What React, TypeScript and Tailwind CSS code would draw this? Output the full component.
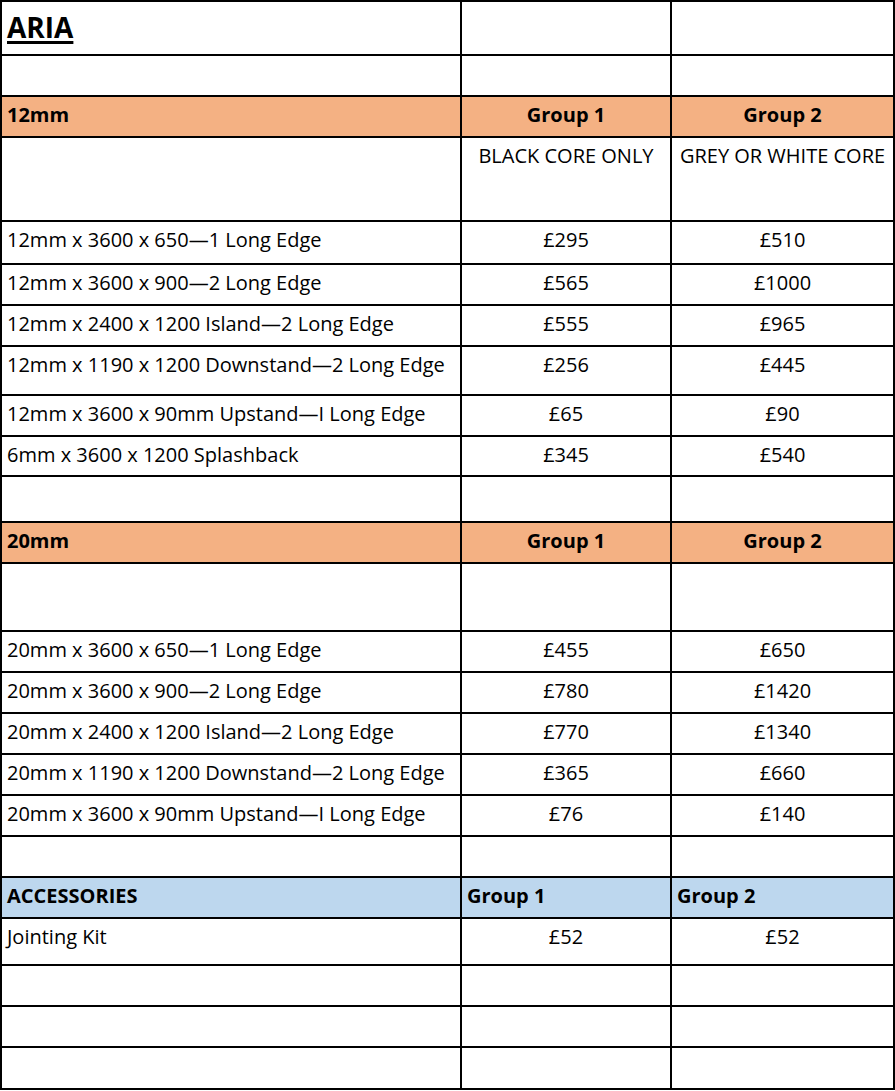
import React from 'react';

type Row = {
  h: string;
  cells: [string, string, string];
  kind?: 'orange' | 'blue' | 'title';
};

const rows: Row[] = [
  { h: 'h-[52px]', cells: ['ARIA', '', ''], kind: 'title' },
  { h: 'h-[39px]', cells: ['', '', ''] },
  { h: 'h-[39px]', cells: ['12mm', 'Group 1', 'Group 2'], kind: 'orange' },
  { h: 'h-[82px]', cells: ['', 'BLACK CORE ONLY', 'GREY OR WHITE CORE'] },
  { h: 'h-[41px]', cells: ['12mm x 3600 x 650\u20141 Long Edge', '£295', '£510'] },
  { h: 'h-[39px]', cells: ['12mm x 3600 x 900\u20142 Long Edge', '£565', '£1000'] },
  { h: 'h-[39px]', cells: ['12mm x 2400 x 1200 Island\u20142 Long Edge', '£555', '£965'] },
  { h: 'h-[47px]', cells: ['12mm x 1190 x 1200 Downstand\u20142 Long Edge', '£256', '£445'] },
  { h: 'h-[39px]', cells: ['12mm x 3600 x 90mm Upstand\u2014I Long Edge', '£65', '£90'] },
  { h: 'h-[38px]', cells: ['6mm x 3600 x 1200 Splashback', '£345', '£540'] },
  { h: 'h-[44px]', cells: ['', '', ''] },
  { h: 'h-[39px]', cells: ['20mm', 'Group 1', 'Group 2'], kind: 'orange' },
  { h: 'h-[66px]', cells: ['', '', ''] },
  { h: 'h-[39px]', cells: ['20mm x 3600 x 650\u20141 Long Edge', '£455', '£650'] },
  { h: 'h-[39px]', cells: ['20mm x 3600 x 900\u20142 Long Edge', '£780', '£1420'] },
  { h: 'h-[39px]', cells: ['20mm x 2400 x 1200 Island\u20142 Long Edge', '£770', '£1340'] },
  { h: 'h-[39px]', cells: ['20mm x 1190 x 1200 Downstand\u20142 Long Edge', '£365', '£660'] },
  { h: 'h-[39px]', cells: ['20mm x 3600 x 90mm Upstand\u2014I Long Edge', '£76', '£140'] },
  { h: 'h-[39px]', cells: ['', '', ''] },
  { h: 'h-[39px]', cells: ['ACCESSORIES', 'Group 1', 'Group 2'], kind: 'blue' },
  { h: 'h-[45px]', cells: ['Jointing Kit', '£52', '£52'] },
  { h: 'h-[39px]', cells: ['', '', ''] },
  { h: 'h-[39px]', cells: ['', '', ''] },
  { h: 'h-[40px]', cells: ['', '', ''] },
];

export default function App() {
  return (
    <div className="w-[895px] bg-white">
      <div
        className="grid grid-cols-[458px_208px_221px] gap-[2px] bg-black p-[2px] text-[20px] leading-[22px] text-black"
        style={{ fontFamily: '"Open Sans", Lato, sans-serif' }}
      >
        {rows.map((r, i) =>
          r.cells.map((c, j) => {
            let cls = `${r.h} pt-[7px] px-[5px] whitespace-nowrap overflow-hidden`;
            if (r.kind === 'orange') cls += ' bg-[#f4b183] font-bold';
            else if (r.kind === 'blue') cls += ' bg-[#bdd7ee] font-bold';
            else cls += ' bg-white';
            if (j > 0 && r.kind !== 'blue') cls += ' text-center';
            if (r.kind === 'title' && j === 0) {
              return (
                <div key={`${i}-${j}`} className={`${r.h} bg-white px-[5px] pt-[9px]`}>
                  <span className="text-[28px] leading-[32px] font-bold underline decoration-[2.5px] underline-offset-[3px]">
                    {c}
                  </span>
                </div>
              );
            }
            return (
              <div key={`${i}-${j}`} className={cls}>
                {c}
              </div>
            );
          })
        )}
      </div>
    </div>
  );
}
